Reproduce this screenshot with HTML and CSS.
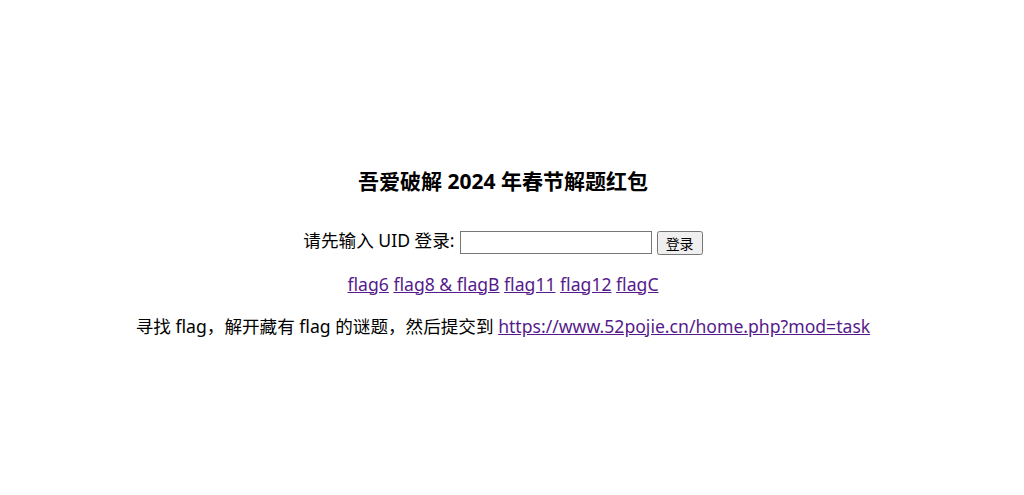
FILE: index.html
```html
<!DOCTYPE html>
<html lang="zh-CN">
<head>
  <meta charset="UTF-8">
  <title>吾爱破解 2024 年春节解题红包</title>
  <link rel="stylesheet" href="styles.css">
</head>
<body>
  <div class="main">
    <h2 class="title">吾爱破解 2024 年春节解题红包</h2>
    <form class="login" id="loginForm">
      <label for="uid">请先输入 UID 登录:</label>
      <input type="text" id="uid" />
      <button type="submit">登录</button>
    </form>
    <p class="links">
      <a href="#">flag6</a>
      <a href="#">flag8 &amp; flagB</a>
      <a href="#">flag11</a>
      <a href="#">flag12</a>
      <a href="#">flagC</a>
    </p>
    <p class="tip">寻找 flag，解开藏有 flag 的谜题，然后提交到 <a href="#">https://www.52pojie.cn/home.php?mod=task</a></p>
  </div>
</body>
</html>
```

FILE: styles.css
```css
html, body { height: 100%; }
body { margin: 0; padding-right: 18px; font-family: "Noto Sans", "Noto Sans CJK SC", sans-serif; font-size: 17.6px; color: #000; display: flex; align-items: center; justify-content: center; }
.main { text-align: center; margin-top: 11px; }
.title { font-size: 21px; font-weight: bold; margin: 0 0 32px; line-height: 28px; }
.login { margin: 0; line-height: 26px; }
.login label { margin-right: 1px; }
.login input { width: 186px; height: 19px; padding: 1px 2px; border: 1px solid #767676; font-size: 13px; vertical-align: middle; }
.login button { font-size: 14px; font-family: "Noto Sans CJK SC", sans-serif; height: 24px; padding: 0 7px; vertical-align: middle; }
.links, .tip { margin: 17px 0 0; line-height: 25px; }
a { color: #551a8b; }
```
